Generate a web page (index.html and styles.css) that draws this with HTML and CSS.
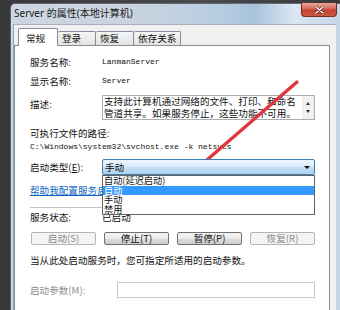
FILE: index.html
```html
<!DOCTYPE html>
<html>
<head>
<meta charset="utf-8">
<link rel="stylesheet" href="styles.css">
</head>
<body>
<div class="screen">
  <div class="window">
    <div class="titlebar">
      <span class="title">Server 的属性(本地计算机)</span>
      <span class="close"><svg width="9" height="8" viewBox="0 0 9 8"><path d="M1 1 L8 7 M8 1 L1 7" stroke="#5a1a14" stroke-width="2.6" stroke-linecap="round"/><path d="M1 1 L8 7 M8 1 L1 7" stroke="#fff" stroke-width="1.6" stroke-linecap="round"/></svg></span>
    </div>
    <div class="frame-body">
      <div class="tabs">
        <div class="tab active">常规</div>
        <div class="tab">登录</div>
        <div class="tab">恢复</div>
        <div class="tab">依存关系</div>
      </div>
      <div class="panel">
        <div class="row r1"><span class="label">服务名称:</span><span class="mono">LanmanServer</span></div>
        <div class="row r2"><span class="label">显示名称:</span><span class="mono">Server</span></div>
        <div class="row r3">
          <span class="label desc-label">描述:</span>
          <div class="desc">
            <div class="desc-text">支持此计算机通过网络的文件、打印、和命名<br>管道共享。如果服务停止，这些功能不可用。</div>
            <div class="vscroll"><span class="tri-up"></span><span class="tri-down"></span></div>
          </div>
        </div>
        <div class="line r4">可执行文件的路径:</div>
        <div class="path">C:\Windows\system32\svchost.exe -k netsvcs</div>
        <div class="row r6">
          <span class="label">启动类型(<u>E</u>):</span>
          <div class="combo">
            <span class="combo-value">手动</span>
            <span class="combo-arrow"></span>
            <ul class="list">
              <li>自动(延迟启动)</li>
              <li class="hl">自动</li>
              <li>手动</li>
              <li>禁用</li>
            </ul>
          </div>
        </div>
        <a class="link">帮助我配置服务启动选项。</a>
        <div class="sep"></div>
        <div class="row r8"><span class="label">服务状态:</span><span>已启动</span></div>
        <div class="buttons">
          <div class="btn dis">启动(S)</div>
          <div class="btn">停止(T)</div>
          <div class="btn">暂停(P)</div>
          <div class="btn dis">恢复(R)</div>
        </div>
        <div class="line hint">当从此处启动服务时，您可指定所适用的启动参数。</div>
        <div class="row r10"><span class="label plabel">启动参数(M):</span><div class="pinput"></div></div>
      </div>
    </div>
  </div>
  <svg class="arrow" width="340" height="310" viewBox="0 0 340 310">
    <line x1="297" y1="82" x2="189" y2="175.5" stroke="#de383d" stroke-width="3.4" stroke-linecap="round"/>
    <polygon points="178,185 185.4,170.2 193.8,179.8" fill="#de383d"/>
  </svg>
</div>
</body>
</html>
```

FILE: styles.css
```css
* { box-sizing: border-box; }
html, body { margin: 0; padding: 0; }
body {
  width: 340px;
  height: 310px;
  overflow: hidden;
  background: #3e3e3e;
  font-family: "Noto Sans CJK SC", "Noto Sans", sans-serif;
  font-size: 9.6px;
  color: #111;
}
.screen {
  position: relative;
  width: 340px;
  height: 310px;
  padding: 3px 0 0 10px;
  background: linear-gradient(90deg, #383838, #4a4a4a 60%, #3a3a3a);
}
.window {
  width: 330px;
  height: 307px;
  border-left: 1px solid #56616d;
  border-top: 1px solid #5f6b78;
  border-top-left-radius: 5px;
  background: linear-gradient(90deg, #cdd7e1 0%, #c8d3df 40%, #b9cde1 62%, #a9c3dc 74%, #dbe7f1 86%, #c5d6e7 100%);
}
.titlebar {
  height: 20px;
  display: flex;
  justify-content: space-between;
  align-items: flex-start;
}
.title {
  padding-left: 3px;
  line-height: 19px;
  font-family: "Noto Sans", "Noto Sans CJK SC", sans-serif;
  font-size: 10px;
  color: #1a1a1a;
}
.close {
  width: 36px;
  height: 14px;
  margin-right: 3px;
  margin-top: -1px;
  border: 1px solid #7e2a22;
  border-top: none;
  border-radius: 0 0 4px 4px;
  background: linear-gradient(#eaa497 0%, #d8705f 40%, #c5412f 55%, #c95a43 100%);
  display: flex;
  align-items: center;
  justify-content: center;
}
.frame-body {
  margin: 0 4px 0 2px;
  height: 287px;
  background: #f0f0f0;
  border-top: 1px solid #a4b0bd;
  border-left: 1px solid #9aa5b1;
}
.tabs {
  display: flex;
  align-items: flex-end;
  height: 20px;
  padding-left: 4px;
}
.tab {
  height: 14px;
  min-width: 38px;
  padding: 0 4px;
  line-height: 13px;
  border: 1px solid #898c95;
  border-left: none;
  border-bottom: none;
  border-radius: 2px 2px 0 0;
  background: linear-gradient(#f5f5f5, #e3e3e3);
}
.tab.active {
  position: relative;
  z-index: 1;
  height: 18px;
  min-width: 40px;
  padding: 3px 0 0 7px;
  line-height: 12px;
  border-left: 1px solid #898c95;
  background: #fff;
  margin-bottom: -1px;
}
.panel {
  height: 270px;
  margin-right: 6px;
  padding: 0 14px 0 15px;
  background: #fff;
  border: 1px solid #898c95;
}
.row {
  display: flex;
  align-items: center;
}
.label {
  width: 72px;
  flex: none;
  line-height: 12px;
}
.line { line-height: 12px; }
.mono, .path {
  font-family: "Liberation Mono", monospace;
  font-size: 8px;
  line-height: 12px;
  color: #111;
}
.r1 { margin-top: 10px; line-height: 12px; }
.r2 { margin-top: 7px; line-height: 12px; }
.r3 { margin-top: 8px; align-items: flex-start; }
.desc-label { padding-top: 3px; }
.desc {
  width: 213px;
  height: 25px;
  border: 1px solid #abadb3;
  display: flex;
}
.desc-text {
  flex: 1;
  padding: 0 0 0 1px;
  line-height: 11.5px;
  white-space: nowrap;
}
.vscroll {
  width: 12px;
  background: #f0f0f0;
  display: flex;
  flex-direction: column;
  align-items: center;
  justify-content: space-around;
  padding: 3px 0;
}
.tri-up {
  border-left: 2.5px solid transparent;
  border-right: 2.5px solid transparent;
  border-bottom: 3px solid #333;
}
.tri-down {
  border-left: 2.5px solid transparent;
  border-right: 2.5px solid transparent;
  border-top: 3px solid #333;
}
.r4 { margin-top: 7px; }
.path { margin-top: 2px; }
.r6 { margin-top: 6px; }
.combo {
  position: relative;
  z-index: 2;
  width: 213px;
  height: 16px;
  border: 1px solid #3c7fb1;
  border-radius: 2px;
  background: linear-gradient(#eef6fd 0%, #dcecfb 45%, #c3def6 52%, #b0d2f1 100%);
  display: flex;
  align-items: center;
  justify-content: space-between;
  padding: 0 4px 0 2px;
}
.combo-value { line-height: 12px; }
.combo-arrow {
  border-left: 3px solid transparent;
  border-right: 3px solid transparent;
  border-top: 3px solid #111;
}
.list {
  position: absolute;
  left: -1px;
  top: 15px;
  width: 213px;
  height: 40px;
  margin: 0;
  padding: 0;
  list-style: none;
  background: #fff;
  border: 1px solid #646464;
}
.list li {
  height: 9.5px;
  line-height: 9.5px;
  font-size: 9.2px;
  padding-left: 1px;
  white-space: nowrap;
}
.list li.hl {
  background: #3399ff;
  color: #fff;
}
.link {
  display: block;
  margin-top: 9px;
  line-height: 12px;
  color: #0a64c2;
  text-decoration: underline;
  white-space: nowrap;
}
.sep {
  margin-top: 11px;
  height: 1px;
  background: #c4c4c4;
}
.r8 { margin-top: 3px; line-height: 12px; }
.buttons {
  display: grid;
  grid-template-columns: repeat(4, 1fr);
  column-gap: 8px;
  margin: 9px 0 0 1px;
}
.btn {
  height: 13px;
  border: 1px solid #707070;
  border-radius: 2px;
  background: linear-gradient(#f4f4f4 0%, #ebebeb 50%, #dddddd 51%, #cfcfcf 100%);
  line-height: 11px;
  text-align: center;
  white-space: nowrap;
}
.btn.dis {
  border-color: #b2b6b9;
  background: #f4f4f4;
  color: #8a8a8a;
}
.hint { margin-top: 9px; white-space: nowrap; }
.r10 { margin-top: 16px; }
.plabel { width: 87px; color: #8d8d8d; }
.pinput {
  width: 198px;
  height: 16px;
  border: 1px solid #c6c9cc;
  background: #fff;
}
.arrow {
  position: absolute;
  left: 0;
  top: 0;
  pointer-events: none;
}
```
